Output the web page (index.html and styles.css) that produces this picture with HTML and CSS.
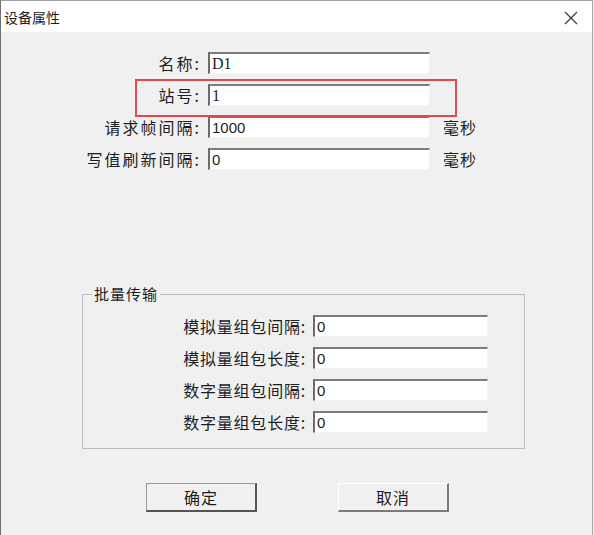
FILE: index.html
```html
<!DOCTYPE html>
<html lang="zh-CN">
<head>
  <meta charset="UTF-8" />
  <title>设备属性</title>
  <link rel="stylesheet" href="styles.css">
</head>
<body>
  <div class="window">
    <!-- 标题栏 -->
    <div class="titlebar">
      <span class="title">设备属性</span>
      <svg class="close" width="14" height="14" viewBox="0 0 14 14">
        <path d="M1 1 L13 13 M13 1 L1 13" stroke="#3a3a3a" stroke-width="1.2" fill="none" />
      </svg>
    </div>

    <div class="content">
      <!-- 基本参数 -->
      <div class="fields">
        <div class="row">
          <label class="label">名称:</label>
          <div class="input serif">D1</div>
        </div>
        <div class="row marked">
          <label class="label">站号:</label>
          <div class="input serif">1</div>
        </div>
        <div class="row">
          <label class="label">请求帧间隔:</label>
          <div class="input">1000</div>
          <span class="unit">毫秒</span>
        </div>
        <div class="row">
          <label class="label">写值刷新间隔:</label>
          <div class="input">0</div>
          <span class="unit">毫秒</span>
        </div>
      </div>

      <!-- 批量传输 -->
      <fieldset class="group">
        <legend>批量传输</legend>
        <div class="group-rows">
          <div class="row">
            <label class="label wide">模拟量组包间隔:</label>
            <div class="input short">0</div>
          </div>
          <div class="row">
            <label class="label wide">模拟量组包长度:</label>
            <div class="input short">0</div>
          </div>
          <div class="row">
            <label class="label wide">数字量组包间隔:</label>
            <div class="input short">0</div>
          </div>
          <div class="row">
            <label class="label wide">数字量组包长度:</label>
            <div class="input short">0</div>
          </div>
        </div>
      </fieldset>

      <div class="buttons">
        <button class="btn default">确定</button>
        <button class="btn">取消</button>
      </div>
    </div>
  </div>
</body>
</html>
```

FILE: styles.css
```css
* {
  box-sizing: border-box;
  font-family: "Noto Sans CJK SC", "Noto Sans", sans-serif;
}

body {
  margin: 0;
  background: #f0f0f0;
  color: #1e1e1e;
}

.window {
  width: 593px;
  height: 535px;
  border-left: 1px solid #6f6f6f;
  border-top: 1px solid #a0a0a0;
  border-right: 1px solid #a8a8a8;
  background: #f0f0f0;
  overflow: hidden;
}

.titlebar {
  height: 31px;
  background: #fff;
  display: flex;
  align-items: center;
  justify-content: space-between;
  padding: 0 14px 0 3px;
}

.title {
  font-size: 14px;
  color: #1e1e1e;
}

.close {
  margin-top: 2px;
}

.content {
  padding-top: 20px;
}

.fields {
  margin-left: 79px;
}

.row {
  display: flex;
  align-items: center;
  height: 22px;
}

.row + .row {
  margin-top: 10px;
}

.label {
  width: 121px;
  text-align: right;
  font-size: 16px;
  line-height: 22px;
  letter-spacing: 2px;
  white-space: nowrap;
  margin-right: 7px;
}

.input {
  width: 222px;
  height: 22px;
  background: #fff;
  border-top: 2px solid #7c7c7c;
  border-left: 2px solid #6c6c6c;
  border-right: 1px solid #f4f4f4;
  border-bottom: 1px solid #f4f4f4;
  font-family: "Liberation Sans", sans-serif;
  font-size: 15px;
  line-height: 19px;
  padding-left: 2px;
  color: #1e1e1e;
}

.input.serif {
  font-family: "Liberation Serif", serif;
  font-size: 16px;
}

.unit {
  margin-left: 13px;
  font-size: 16px;
  letter-spacing: 1px;
}

.row.marked {
  position: relative;
}

.row.marked::after {
  content: '';
  position: absolute;
  left: 55px;
  top: -5px;
  width: 318px;
  height: 34px;
  border: 2px solid #e2474f;
}

.group {
  margin: 115px 0 0 81px;
  width: 443px;
  padding: 0 0 15px 0;
  border: 1px solid #bcbcbc;
}

.group legend {
  margin-left: 9px;
  padding: 0 2px;
  font-size: 15px;
  line-height: 18px;
  letter-spacing: 1px;
}

.group-rows {
  margin-top: 12px;
  padding-left: 100px;
}

.label.wide {
  width: 123px;
  margin-right: 7px;
  letter-spacing: 0.8px;
}

.input.short {
  width: 175px;
}

.buttons {
  display: flex;
  gap: 81px;
  margin-top: 34px;
  padding-left: 145px;
}

.btn {
  width: 111px;
  height: 29px;
  background: #f0f0f0;
  font-size: 16px;
  color: #1e1e1e;
  padding: 0;
  letter-spacing: 1px;
  border-top: 1px solid #ffffff;
  border-left: 1px solid #ffffff;
  border-right: 2px solid #7a7a7a;
  border-bottom: 2px solid #7a7a7a;
}

.btn.default {
  border-top: 1px solid #9a9a9a;
  border-left: 1px solid #9a9a9a;
  border-right: 2px solid #555;
  border-bottom: 2px solid #555;
}
```
